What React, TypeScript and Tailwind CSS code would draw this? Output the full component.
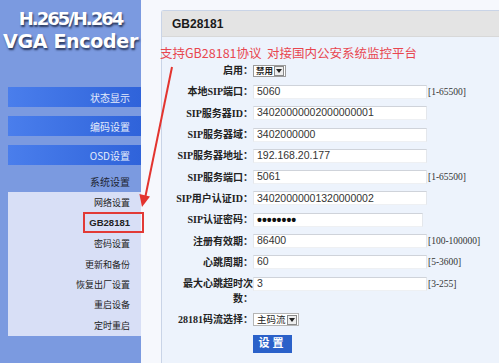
import React from "react";

type RowProps = { label: React.ReactNode; value?: string; hint?: string; narrow?: boolean; password?: boolean };

function Row({ label, value, hint, narrow, password }: RowProps) {
  return (
    <div className="flex h-[21.3px] items-center">
      <div className="w-[91px] shrink-0 whitespace-nowrap text-right text-[10px] font-bold text-[#222] [font-family:'Liberation_Serif','Noto_Sans_CJK_SC',serif]">
        {label}
      </div>
      <div
        className={`${narrow ? "w-[170px]" : "w-[174px]"} flex h-[14px] shrink-0 items-center overflow-hidden border border-t-[#cfd3da] border-x-[#e4e7ec] border-b-[#eef0f3] bg-white pl-[3px] text-[10.5px] text-[#333] [font-family:'Liberation_Sans',Arial,sans-serif]`}
      >
        {password ? <span className="text-[14px] font-bold leading-none text-[#111]">••••••••</span> : value}
      </div>
      {hint && (
        <span className="ml-[1px] text-[9.5px] text-[#333] [font-family:'Liberation_Serif',serif]">{hint}</span>
      )}
    </div>
  );
}

function Caret() {
  return (
    <span className="flex h-[10px] w-[10px] shrink-0 items-center justify-center border border-[#8a8a8a] bg-[#eeeeee]">
      <svg width="6" height="4" viewBox="0 0 6 4">
        <polygon points="0,0 6,0 3,4" fill="#222" />
      </svg>
    </span>
  );
}

export default function App() {
  const sub = ["网络设置", "GB28181", "密码设置", "更新和备份", "恢复出厂设置", "重启设备", "定时重启"];
  return (
    <div className="relative flex h-[363px] w-[499px] overflow-hidden bg-[#f6f8fd] [font-family:'Noto_Sans_CJK_SC',sans-serif]">
      {/* Sidebar */}
      <div className="flex w-[141px] shrink-0 flex-col bg-[#7b9ae0]">
        <div className="pt-[7px] text-center font-bold leading-[23px] text-white [font-family:'DejaVu_Sans',sans-serif] [text-shadow:1px_2px_2px_rgba(20,30,60,0.8)]">
          <div className="text-[18px] tracking-[-2px]">H.265/H.264</div>
          <div className="text-[19px] tracking-[-0.3px]">VGA Encoder</div>
        </div>
        <div className="mt-[34px] flex flex-col gap-[9px] pl-[8px]">
          {["状态显示", "编码设置", "OSD设置"].map((t) => (
            <div
              key={t}
              className="flex h-[20px] items-center justify-end bg-gradient-to-r from-[#4a7eec] to-[#2f63da] pr-[11px] text-[10px] text-[#e4ebfb]"
            >
              {t}
            </div>
          ))}
        </div>
        <div className="h-[27px] pl-[8px] pr-[11px] pt-[10px] text-right text-[10px] leading-[14px] text-[#1e2533]">系统设置</div>
        <div className="ml-[8px] h-[144px] bg-[#d8dff6] pt-[1px]">
          {sub.map((t) => (
            <div
              key={t}
              className={`flex h-[20.4px] items-center justify-end pr-[11px] text-[#222] ${
                t === "GB28181" ? "text-[9.5px] font-bold [font-family:'Liberation_Sans',Arial,sans-serif]" : "text-[9px]"
              }`}
            >
              {t}
            </div>
          ))}
        </div>
      </div>

      {/* Panel */}
      <div className="ml-[20px] mt-[10px] flex flex-1 flex-col rounded-tl-[3px] border-l border-t border-[#c9d4e7] bg-[#edf3fc]">
        <div className="flex h-[26px] items-center border-b border-[#d8d8d8] bg-[#e4e4e4] pl-[10px] text-[12px] font-bold text-[#1a1a1a] [font-family:'Liberation_Sans',Arial,sans-serif]">
          GB28181
        </div>
        <div className="-ml-[2px] mt-[8px] h-[15px] whitespace-nowrap text-[12.5px] leading-[15px] text-[#e8464f]">
          支持GB28181协议&nbsp;&nbsp;对接国内公安系统监控平台
        </div>
        <div className="flex flex-col">
          <div className="flex h-[21.3px] items-center">
            <div className="w-[91px] shrink-0 text-right text-[10px] font-bold text-[#222] [font-family:'Liberation_Serif','Noto_Sans_CJK_SC',serif]">
              启用：
            </div>
            <div className="flex h-[12px] w-[33px] items-center justify-between whitespace-nowrap border border-[#9a9a9a] bg-white pl-[2px] pr-[1px] text-[8.5px] leading-none text-[#222]">
              <span className="font-bold">禁用</span>
              <Caret />
            </div>
          </div>
          <Row label="本地SIP端口：" value="5060" hint="[1-65500]" />
          <Row label="SIP服务器ID：" value="34020000002000000001" />
          <Row label="SIP服务器域：" value="3402000000" />
          <Row label="SIP服务器地址：" value="192.168.20.177" />
          <Row label="SIP服务端口：" value="5061" hint="[1-65500]" />
          <Row label="SIP用户认证ID：" value="34020000001320000002" />
          <Row label="SIP认证密码：" password narrow />
          <Row label="注册有效期：" value="86400" hint="[100-100000]" />
          <Row label="心跳周期：" value="60" hint="[5-3600]" />
          <div className="flex h-[36.3px] items-start">
            <div className="mt-[3.15px] w-[91px] shrink-0 text-right text-[10px] font-bold leading-[15px] text-[#222] [font-family:'Liberation_Serif','Noto_Sans_CJK_SC',serif]">
              最大心跳超时次
              <br />
              数：
            </div>
            <div className="mt-[3.65px] flex h-[14px] w-[174px] shrink-0 items-center border border-t-[#cfd3da] border-x-[#e4e7ec] border-b-[#eef0f3] bg-white pl-[3px] text-[10.5px] text-[#333] [font-family:'Liberation_Sans',Arial,sans-serif]">
              3
            </div>
            <span className="ml-[1px] mt-[4px] text-[9.5px] text-[#333] [font-family:'Liberation_Serif',serif]">[3-255]</span>
          </div>
          <div className="flex h-[21.3px] items-center">
            <div className="w-[91px] shrink-0 text-right text-[10px] font-bold text-[#222] [font-family:'Liberation_Serif','Noto_Sans_CJK_SC',serif]">
              28181码流选择：
            </div>
            <div className="flex h-[13px] w-[46px] items-center justify-between whitespace-nowrap border border-[#b5b5b5] bg-white pl-[3px] pr-[1px] text-[9.5px] leading-none text-[#222]">
              <span>主码流</span>
              <Caret />
            </div>
          </div>
          <div className="mt-[4px] pl-[91px]">
            <div className="flex h-[18px] w-[39px] items-center justify-center bg-[#2b61c9] text-[11px] font-bold tracking-[3px] text-white [font-family:'Liberation_Serif','Noto_Sans_CJK_SC',serif]">
              设置
            </div>
          </div>
        </div>
      </div>

      {/* Annotation: red box + arrow */}
      <div className="pointer-events-none absolute left-[83px] top-[212px] h-[21px] w-[61px] border-2 border-[#e23a36]" />
      <svg className="pointer-events-none absolute left-0 top-0" width="499" height="363" viewBox="0 0 499 363">
        <line x1="172" y1="67" x2="145.5" y2="196" stroke="#e3342f" strokeWidth="2" />
        <polygon points="142,207 139.4,194 150,196.5" fill="#e3342f" />
      </svg>
    </div>
  );
}
